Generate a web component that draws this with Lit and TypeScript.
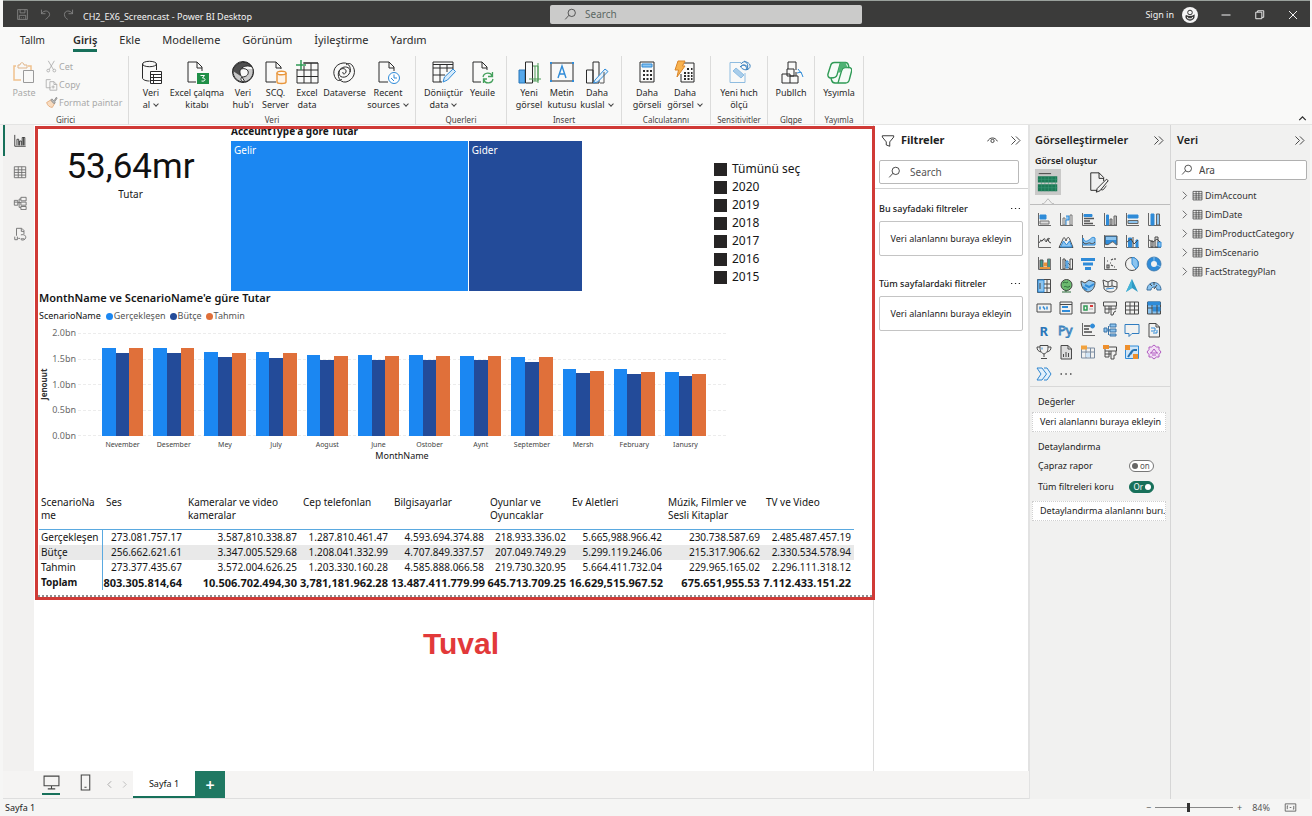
import { LitElement, html, css, svg } from "lit";
import { customElement, property, state } from "lit/decorators.js";
import { classMap } from "lit/directives/class-map.js";

const B = "#2f8bd8";
const L = "#8cc4ef";
const O = "#e8953a";
const G = "#2f9a55";
const axes = svg`<path d="M2.5 1v12.5H15" stroke="#666"/>`;

const ICONS: Record<string, unknown> = {
  save: svg`<path d="M2 2h12v12H2zM5 2v4h6V2M4 14V9h8v5M6 12h1M9 12h1"/>`,
  undo: svg`<path d="M3 2v5h5M3 7c3-5 10-4 10 1 0 3-3 4-5 6"/>`,
  redo: svg`<path d="M13 2v5H8M13 7C10 2 3 3 3 8c0 3 2 5 4 6"/>`,
  search: svg`<circle cx="9.5" cy="6" r="4.5"/><path d="M6 9l-4.500 5"/>`,
  user: svg`<circle cx="8" cy="8" r="8" fill="#f4f4f4" stroke="none"/><circle cx="8" cy="5.500" r="2.300" stroke="#333"/><path d="M4 8.500c-.5 6 8.500 6 8 0-2 1.500-6 1.500-8 0M6 10.500h4" stroke="#333" stroke-width="1.300"/>`,
  min: svg`<path d="M3.500 8h9"/>`,
  max: svg`<path d="M4 5.500h6.500v7H4zM6 5.500V4h6.500v7H10.500"/>`,
  close: svg`<path d="M4 4l8 8M12 4l-8 8"/>`,
  chevR2: svg`<path d="M3 3l5 5-5 5M8.500 3l5 5-5 5"/>`,
  chevR: svg`<path d="M5.500 2.500L11 8l-5.500 5.500"/>`,
  chevL: svg`<path d="M10 4L6 8l4 4"/>`,
  chevU: svg`<path d="M4 10l4-4 4 4" stroke-width="1.500"/>`,
  funnel: svg`<path d="M1.500 2h13v1.500L10 9v5l-4-1.500V9L1.500 3.500z"/>`,
  eye: svg`<path d="M2 9c2.500-5.500 9.500-5.500 12 0"/><circle cx="8" cy="8.500" r="2"/>`,
  paste: svg`<path d="M4 6H2v14h7M16 6h3v4" stroke="#f0c18d" stroke-width="1.500"/><path d="M6 8V5h2c0-3 4-3 4 0h3v3z" stroke="#e0b58a"/><path d="M11.500 10.500h10v12h-10z" stroke="#9a9a9a"/>`,
  cut: svg`<path d="M4 1l6.500 11M11.500 1L5 12"/><circle cx="4" cy="13" r="1.700"/><circle cx="11.500" cy="13" r="1.700"/>`,
  copy: svg`<path d="M7 12H1.500V2H7M6 4.500h5l3.500 3.500V15H6zM11 4.500V8h3.500M10 9v4M8 11h4"/>`,
  brush: svg`<path d="M2 8l5-3 5 4-3 5c-3 0-6-2-7-6z" stroke="#e3a876" fill="#f8dcc0"/><path d="M7 5l1.500-1.500L11 6l3-4.500 1 1L12 7l.5 1.500L11 9.500z" fill="#bbb" stroke="#888"/>`,
  database: svg`<path d="M3.500 4v14c0 2 4 3 7 3M17.500 4v6"/><ellipse cx="10.500" cy="4" rx="7" ry="2.700"/><path d="M11.500 11.500h11v12h-11zM11.500 14.500h11M11.500 17.500h11M11.500 20.500h11M14.500 14.500v9" fill="#fff"/>`,
  excelFile: svg`<path d="M17 11V7l-5-5H3v20h8M12 2v6h5"/><path d="M12 13h12v11H12z" fill="#1f8f47" stroke="none"/><path d="M15.500 15.500h4l-2 2.500c4 0 3 4-1 3" stroke="#fff"/>`,
  hub: svg`<circle cx="12" cy="12" r="10.500"/><path d="M2 9C6 1 17 0 21 7c-4-2-9-1-11 2-2 2-1 6 1 8-5 0-9-3-9-8z" fill="#4f4f4f"/><path d="M2 11c0 7 5 11 11 11-3-1-4-3-2-5M22 9c1 6-2 11-8 13l-3-5c5 0 7-3 6-6-1-2-4-3-7-2" fill="#c9c9c9"/>`,
  sqlFile: svg`<path d="M18 9V7l-5-5H3v20h10M13 2v6h5"/><path d="M14 13v9c0 2 9 2 9 0v-9" stroke="${O}" fill="#fdf3e8" stroke-width="1.400"/><ellipse cx="18.500" cy="13" rx="4.500" ry="1.800" stroke="${O}" fill="#fff" stroke-width="1.400"/>`,
  excelData: svg`<path d="M8 3h15v20H2V9M2 10h21M2 16.500h21M9 6v17M16 3v20M9 3h14"/><path d="M6 0v10M1 5h10" stroke="${G}" stroke-width="1.500"/>`,
  dataverse: svg`<path d="M4 19C-1 12 3 4 11 3c7-1 9 7 6 11-3 5-11 4-10-2 1-5 8-4 7 0-1 3-4 2-3 0M20 5c5 6 2 15-6 17-7 1-9-7-7-11 3-6 12-5 11 1"/><path d="M4 19c2 2 4 2 6 0M20 5c-2-2-4-2-6 0"/>`,
  recent: svg`<path d="M18 11V7l-5-5H3v20h9M13 2v6h5"/><circle cx="18" cy="18" r="5.500" stroke="${B}" fill="#fff"/><path d="M18 14.500V18h3M15 18l3 3" stroke="${B}"/>`,
  transform: svg`<path d="M2 2h20v7M2 2v20h9M2 8h20M2 15h12M9 5v17M16 5v7M2 4.500h20"/><path d="M12 22l1.500-5L22 9l2.500 2.500-8 8.500z" stroke="${B}" fill="#d6ebfb"/>`,
  refresh: svg`<path d="M17 10V7l-5-5H3v20h8M12 2v6h5"/><path d="M13 17c1-5 8-5 9-1M22.500 12v4.500H18M23 19c-1 5-8 5-9 1M13.500 23v-4H17" stroke="#45a05c" stroke-width="1.300"/>`,
  newVisual: svg`<path d="M2 10h6v13H2z" fill="#57a9ea" stroke="#2774b8"/><path d="M8.500 2h7v21h-7z"/><path d="M16 6h5v15h-5M18 6v15" stroke="#4d9b57"/><path d="M12 19h12M21 3v20" stroke="#4d9b57"/>`,
  textBox: svg`<path d="M1 3h22v18H1z"/><path d="M8 18l4-12 4 12M9.500 14h5" stroke="${B}" stroke-width="1.400"/><path d="M0 2h2v2H0zM22 2h2v2h-2zM0 20h2v2H0zM22 20h2v2h-2z" fill="${B}" stroke="none"/>`,
  moreVisual: svg`<path d="M1.500 10H8v13H1.500zM8 2h6v21H8z"/><path d="M10 20L20 9l3 2.500L12.500 22l-4 1z" fill="#e4f1fb" stroke="${B}"/><path d="M15 23h4V12" stroke="#555"/>`,
  calc: svg`<path d="M5 2h14v20H5z" /><path d="M7 4h10v3H7z" fill="${L}" stroke="${B}"/><path d="M8 11h2M11.500 11h2M15 11h2M8 15h2M11.500 15h2M15 15h2M8 19h2M11.500 19h2M15 19h2" stroke-width="2"/>`,
  calcFlash: svg`<path d="M11 3h10v19H8v-8"/><path d="M14 9h2M18 9h1.500M11 13h2M14.500 13h2M18 13h1.500M11 16h2M14.500 16h2M18 16h1.500M11 19h2M14.500 19h2M18 19h1.500" stroke-width="2"/><path d="M5 1h7L9.500 6H12l-8 11 1.500-7H2z" fill="#f8b24e" stroke="#d9852a"/>`,
  quick: svg`<path d="M14 2.500H3v20h15V13" stroke="#8fbce0"/><path d="M6 11l3-3 8 7-3 3z" fill="#a9cdea" stroke="#8dbde3"/><path d="M14 4c2-4 8-2 9 1 1 4-4 6-7 4-3-1-2-4 1-4s5 3 3 5M13 7c3-4 8-1 6 3M17 1c4 2 5 5 2 9" stroke="#3a82c0"/>`,
  publish: svg`<path d="M9 2h8v8M9 2v7M8 9h7v7H8zM3 14h8v9H3zM11 16h8v7h-8M17 12v4"/><path d="M18 13l4-1 2 5M19 9l3 4" stroke="${B}"/>`,
  copilot: svg`<path d="M7.500 2.500h11c2.500 0 2.500 1 3 3l.5 2c2.500 0 3 2 2.500 4l-2 7.500c-.5 3-2 4-4 4H8c-2 0-3-1-3.500-3L4 18c-2.500 0-3.500-2-3-4l2.500-8c.5-2.500 2-3.500 4-3.500z" fill="#f6fbf7" stroke="#2f9a55" stroke-width="1.400"/><path d="M13.500 2.500L10 15c-.5 2-2 3-6 3M22 7.500h-4c-2.500 0-3 1.500-3.500 3.500l-3.500 12" stroke="#2f9a55" stroke-width="1.300"/><path d="M13.500 2.500h5l2 5h-3c-2 0-2.500 1-3 3l-1 2h-3z" fill="#4fb274" stroke="none"/>`,
  navReport: svg`<path d="M2 1v13h12.500M4.500 13V6h2v7M7.500 13V8h2v5M10.500 13V4h3v9M12 4v9"/>`,
  navTable: svg`<path d="M1.500 2h13v12.500h-13zM1.500 5.500h13M1.500 8.500h13M1.500 11.500h13M6 2v12.500M10 2v12.500"/>`,
  navModel: svg`<path d="M9 1.500h6v4H9zM9 7h6v3.500H9zM9 12h6v3.500H9zM1.500 5h4v5.500h-4zM5.500 7.500H9M7 3.500V13h2M7 3.500h2M1.500 7h4"/>`,
  navQuery: svg`<path d="M4 10V1.500h6l2.500 2.500v4M9.500 2v3h3M2 11v3.500h3V11M6 13h2M9 9c4-1 6 1 5.500 3.500S9 16 9 13.500h4"/>`,
  build: svg`<path d="M2 3h14" stroke="#333"/><path d="M1 6h22v7H1zM1 15h22v8H1z" fill="#1c7a56" stroke="none"/><path d="M1 19h22M1 9.500h22M5 6v17M9 6v17M13 6v17M17 6v17M21 6v17" stroke="#3f9877" stroke-width=".6"/>`,
  format: svg`<path d="M10 21H3V2h9l5 5v4M12 2v6h5"/><path d="M20 9l2 1.500-9 11-4 1.500 1-4zM14 20c3 2 4-2 6-4" />`,
  v0: svg`${axes}<path d="M4 3h6v4H4z" fill="${B}" stroke="${B}"/><path d="M4 9h9v3H4z" fill="#ddd" stroke="#777"/>`,
  v1: svg`${axes}<path d="M5 6h2v7H5zM12 3h2v10h-2z" stroke="#777"/><path d="M8 4h3v4H8v5" fill="${L}" stroke="${B}"/>`,
  v2: svg`${axes}<path d="M4 2.500h8v2H4z" fill="${B}" stroke="${B}"/><path d="M4 6.500h10M4 9h6M4 11.500h9" stroke="#555" stroke-width="1.500"/>`,
  v3: svg`${axes}<path d="M4.500 3h2v10h-2z" fill="${B}" stroke="${B}"/><path d="M8 7h2v6H8zM12 4h2.500v9H12z" fill="#bbb" stroke="#666"/>`,
  v4: svg`${axes}<path d="M4 3h10v3H4z" fill="${B}" stroke="${B}"/><path d="M4 8.500h10v3H4z" fill="${L}" stroke="#666"/>`,
  v5: svg`${axes}<path d="M5 2h3v11H5z" fill="${B}" stroke="${B}"/><path d="M10.500 2h3v11h-3z" fill="${L}" stroke="#666"/>`,
  v6: svg`${axes}<path d="M3 9c2-4 3-1 4-3s2-2 2 0 2 2 2 0 2-2 3-1M4 6l2 1 2-2M10 8l2-3 1 3 2 1"/>`,
  v7: svg`<path d="M1 13.500L5 5c1-3 2-1 3 2 1-4 3-5 4-1l3 7.500z"/><path d="M2.500 13l3-6 3 4 3-4 2.500 6z" fill="${L}" stroke="${B}"/>`,
  v8: svg`${axes}<path d="M3 4c2 5 4 3 6 2s3-4 6-2v7H3z" fill="${L}" stroke="${B}"/><path d="M3 8c3 4 5 0 7 1s3 1 5-1"/>`,
  v9: svg`${axes}<path d="M3 2h12v9c-2 0-3-4-5-3s-4 4-7 2z" fill="${B}" stroke="#555"/><path d="M4 3h10v3H4z" fill="${L}" stroke="none"/>`,
  v10: svg`${axes}<path d="M4.500 4h3v9h-3zM12 6h2v7h-2z" fill="${B}" stroke="${B}"/><path d="M9 3v10M3 8l4-3 3 5 4-4"/>`,
  v11: svg`${axes}<path d="M5 7h2v6H5zM9 3h3v10H9z" fill="#ddd"/><path d="M12 8h3v5h-3z" fill="${L}" stroke="${B}"/><path d="M3 6l4 2 4-3 3 3"/>`,
  v12: svg`${axes}<path d="M4 4h3v9H4z" fill="#3f9a8c" stroke="#555"/><path d="M8 7h3v3H8z" fill="${O}" stroke="${O}"/><path d="M11.500 3h3v10h-3z" fill="#3f9a8c" stroke="#777"/><path d="M4 11h10v2H4z" fill="${O}" stroke="none"/>`,
  v13: svg`${axes}<path d="M5 3h2v10H5zM12 3h2.500v10H12zM7 4l5 5M7 9l5 4"/><path d="M8 5h2v7H8z" fill="${L}" stroke="${B}"/>`,
  v14: svg`<path d="M1 2h14v3H1zM3 6.500h10v3H3zM5 11h6v3H5z" fill="${B}" stroke="none"/>`,
  v15: svg`${axes}<path d="M5 9h2v3H5zM5 5h1M8 7h1M9 9l2 1M12 11h1M9 4l2-1M13 2v2" stroke-width="1.200"/>`,
  v16: svg`<circle cx="8" cy="8" r="6.500"/><path d="M8 1.500A6.500 6.500 0 0112 13L8 8z" fill="${L}" stroke="${B}"/>`,
  v17: svg`<circle cx="8" cy="8" r="5" stroke="${B}" stroke-width="4"/><circle cx="8" cy="8" r="7" stroke="#3b76a8" stroke-width=".8"/><path d="M8 5V1M11 9l4 2" stroke="${L}"/>`,
  v18: svg`<path d="M1.500 1.500h13v13h-13z"/><path d="M2 2h6v12H2z" fill="${L}" stroke="${B}"/><path d="M11 2v12M8 6h6M8 10h6M4 5v6"/>`,
  v19: svg`<circle cx="8.500" cy="7" r="5.500" fill="#6cba6f" stroke="#444"/><path d="M5 5c2-2 3 1 5-1M6 9c2-2 3 2 6-1M4 14h9M8 12v2" stroke="#2c6b3a"/>`,
  v20: svg`<path d="M1 3l4 2 4-3 6 2c0 5-2 9-7 10-4-1-7-5-7-11z" fill="${L}"/><path d="M5 7l4 2 5-3M3 9l4 3" stroke="${B}" stroke-width="2"/>`,
  v21: svg`<path d="M1 2l5 2 4-2 5 2v6c-2 4-5 4-7 4s-7-2-6-5zM6 4v5M10 2v6M2 8l4 1 4-1 5 1"/><path d="M4 11l8-1" stroke="${B}"/>`,
  v22: svg`<path d="M8 1l6 13-6-4-6 4z" fill="#2f9ac4" stroke="none"/><path d="M8 1v9l-6 4z" fill="#46b4d8" stroke="none"/>`,
  v23: svg`<path d="M1 12c0-10 14-10 14 0h-4c0-4-6-4-6 0z" fill="${L}" stroke="#3b6f9c"/><path d="M8 11l3-4M4 6l2 2M8 4v3"/>`,
  v24: svg`<path d="M1 4h14v8H1z"/><path d="M4 6.500v3M7 6.500l2 3M11 6.500v3" stroke="${B}" stroke-width="1.500"/>`,
  v25: svg`<path d="M2 2h12v12H2zM2 4.500h12"/><path d="M4 7h6M4 11h8" stroke="${B}" stroke-width="2"/>`,
  v26: svg`<path d="M1 3h14v10H1z"/><path d="M4 6h3v4H4z" stroke="${G}" stroke-width="1.500"/><path d="M10 6h3" stroke="#d83b3b" stroke-width="2"/><path d="M9 9h4" stroke="#aaa"/>`,
  v27: svg`<path d="M1.500 2h13v4h-13zM3 6v7h4V6M9 6v3h5V6M9 9v6h2l1-3 2-1M3 9h6"/>`,
  v28: svg`<path d="M1.500 2h13v12h-13zM1.500 6h13M1.500 10h13M6 2v12M10.500 2v12"/>`,
  v29: svg`<path d="M1.500 2h13v12h-13z" fill="${L}"/><path d="M2 2h12v3H2zM7 7h7v4H7z" fill="${B}" stroke="${B}"/><path d="M6 5v9M1.500 8h5M11 5v9"/>`,
  v30: svg`<text x="3.500" y="13.500" font-size="13" font-weight="700" fill="#2b76b9" stroke="none">R</text>`,
  v31: svg`<text x="0" y="12.500" font-size="13" fill="none" stroke="#3a82bd" stroke-width=".9">Py</text>`,
  v32: svg`${axes}<path d="M4 4h6M4 7h5M4 10h8" stroke-width="1.500"/><circle cx="12.500" cy="4" r="2" fill="${B}" stroke="${B}"/>`,
  v33: svg`<path d="M8 2h6v3H8zM8 7h6v3H8zM8 12h6v2H8zM2 6h3v4H2zM5 8h3M6.500 4v9" fill="${L}" stroke="#3a73a6"/>`,
  v34: svg`<path d="M1 2.500h14v9H8l-3 3v-3H1z" stroke="#2f7cc0"/>`,
  v35: svg`<path d="M3 15V1.500h7L13.500 5v10zM10 1.500V5h3.500"/><path d="M5 6h4v3H5M7 11h4V8" stroke="${B}"/>`,
  v36: svg`<path d="M4 1.500h8c0 4 0 7-4 8.500-4-1.500-4-4.500-4-8.500zM4 3H1c0 3 1 4 4 5M12 3h3c0 3-1 4-4 5M8 10v3M5 14.500h6"/><path d="M6 3.500v2" stroke="${B}"/>`,
  v37: svg`<path d="M3 15V1.500h7L13.500 5v10zM10 1.500V5h3.500M5.500 13v-3M8 13V8M10.500 13v-4" fill="#ddd"/>`,
  v38: svg`<path d="M1.500 4h13v10h-13zM1.500 8h13M6 4v10M10.500 4v10" stroke="#7a8ba0"/><path d="M1 1.500h6v4H1z" fill="#f2a23c" stroke="none"/><path d="M6 9h4v4H6z" fill="#cfe4f6" stroke="none"/>`,
  v39: svg`<path d="M3 3h11.500v4H3zM3 7v6h4V7M9 7v8h3v-4h2V7M3 10h6"/><path d="M1 1h6v4H1z" fill="#ee8f2c" stroke="none"/>`,
  v40: svg`<path d="M1.500 2h13v12.500h-13z" fill="#cfe5f7" stroke="${B}"/><path d="M1 1h5v5H1zM9 10h5v5H9z" fill="#ee8f2c" stroke="none"/><path d="M6 10c2 0 1-4 4-4h3M4 13l4-6" stroke="#2673b3" stroke-width="2"/>`,
  v41: svg`<path d="M8 1l2.500 2H13v2.500L15 8l-2 2.500V13h-2.500L8 15l-2.500-2H3v-2.500L1 8l2-2.500V3h2.500z" stroke="#b05bc0" fill="#f2dff5"/><path d="M5 9l3-4 3 4M4 9h8M6 11h4" stroke="#b05bc0"/>`,
  v42: svg`<path d="M1 2h5l4.500 6L6 14H1l4-6zM8 2h3l4 6-4 6H8" stroke="#2f86d0" fill="#e2f0fb"/>`,
  v43: svg`<path d="M2.500 8h1.500M7.300 8h1.500M12 8h1.500" stroke-width="1.500"/>`,
  monitor: svg`<path d="M1 2h14v9H1zM8 11v3M4.500 14h7"/>`,
  phone: svg`<path d="M4 1h8v14H4zM7 12.500h2"/>`,
  fit: svg`<path d="M1.500 3.500h13v9h-13zM4 6v4M12 6v4M7 8h2M4 6h1M11 10h1"/>`,
  caret: svg`<path d="M0 15.500h2.500L8 9l5.500 6.500H16" stroke="#aaa" fill="#f1f1f0"/>`,
};
const LARGE = new Set(["paste", "database", "excelFile", "hub", "sqlFile", "excelData", "dataverse", "recent", "transform", "refresh", "newVisual", "textBox", "moreVisual", "calc", "calcFlash", "quick", "publish", "copilot", "build", "format"]);

function icon(name: string, size = 16) {
  return html`<svg width=${size} height=${size} viewBox=${LARGE.has(name) ? "0 0 25 25" : "0 0 16 16"} fill="none" stroke="currentColor" aria-hidden="true">${ICONS[name]}</svg>`;
}

const base = css`
  * { box-sizing: border-box; }
  button, input { font: inherit; color: inherit; margin: 0; }
  button { border: 0; background: none; padding: 0; text-align: inherit; }
  svg { display: block; flex: none; }
  h1, h2, h3, p, ul { margin: 0; padding: 0; list-style: none; }
`;

@customElement("title-bar")
class TitleBar extends LitElement {
  static styles = [base, css`
    :host { display: grid; grid-template-columns: 547fr 312px 448fr; align-items: center; height: 27px; margin: 0 2px 0 3px; padding-top: 1px; background: #3b3b3a; color: #f2f2f2; border-top: 1px solid #9aa19c; font-size: 9px; }
    .left, .right { display: flex; align-items: center; }
    .left { padding-left: 13px; color: #8b8b8b; }
    .left button + button { margin-left: 10px; }
    .name { margin-left: 8px; padding-top: 4px; color: #f2f2f2; }
    .search { display: flex; align-items: center; height: 19px; background: #cbcbca; border-radius: 2px; padding-left: 14px; gap: 8px; color: #3a3a3a; font-size: 10px; }
    .search input { flex: 1; min-width: 0; border: 0; background: none; outline: 0; padding: 0; }
    .search input::placeholder { color: #5b6864; opacity: 1; }
    .right { justify-content: flex-end; padding-right: 9px; }
    .right button { display: flex; align-items: center; gap: 8px; }
    .win { margin-left: 18px; }
    .first { margin-left: 20px; }
  `];
  render() {
    return html`
      <div class="left">
        <button aria-label="Save">${icon("save", 13)}</button>
        <button aria-label="Undo">${icon("undo", 13)}</button>
        <button aria-label="Redo">${icon("redo", 13)}</button>
        <span class="name">CH2_EX6_Screencast - Power BI Desktop</span>
      </div>
      <label class="search">${icon("search", 13)}<input aria-label="Search" placeholder="Search"></label>
      <div class="right">
        <button>Sign in ${icon("user", 16)}</button>
        <button class="win first" aria-label="Minimize">${icon("min")}</button>
        <button class="win" aria-label="Maximize">${icon("max", 15)}</button>
        <button class="win" aria-label="Close">${icon("close")}</button>
      </div>`;
  }
}

type Cmd = { icon: string; text: string[]; w: number; more?: boolean };
const GROUPS: { label: string; items: Cmd[] }[] = [
  { label: "Veri", items: [
    { icon: "database", text: ["Veri", "al"], w: 32, more: true },
    { icon: "excelFile", text: ["Excel çalqma", "kitabı"], w: 60 },
    { icon: "hub", text: ["Veri", "hub'ı"], w: 32 },
    { icon: "sqlFile", text: ["SCQ.", "Server"], w: 33 },
    { icon: "excelData", text: ["Excel", "data"], w: 30 },
    { icon: "dataverse", text: ["Dataverse"], w: 45 },
    { icon: "recent", text: ["Recent", "sources"], w: 42, more: true },
  ]},
  { label: "Querleri", items: [
    { icon: "transform", text: ["Döniiçtür", "data"], w: 43, more: true },
    { icon: "refresh", text: ["Yeuile"], w: 35 },
  ]},
  { label: "Insert", items: [
    { icon: "newVisual", text: ["Yeni", "görsel"], w: 32 },
    { icon: "textBox", text: ["Metin", "kutusu"], w: 34 },
    { icon: "moreVisual", text: ["Daha", "kuslal"], w: 36, more: true },
  ]},
  { label: "Calculatannı", items: [
    { icon: "calc", text: ["Daha", "görseli"], w: 38 },
    { icon: "calcFlash", text: ["Daha", "görsel"], w: 38, more: true },
  ]},
  { label: "Sensitivitler", items: [{ icon: "quick", text: ["Yeni hıch", "ölçü"], w: 44 }] },
  { label: "Glqpe", items: [{ icon: "publish", text: ["Publlch"], w: 34 }] },
  { label: "Yayımla", items: [{ icon: "copilot", text: ["Ysyımla"], w: 36 }] },
];

@customElement("app-ribbon")
class AppRibbon extends LitElement {
  static styles = [base, css`
    :host { display: block; background: #f9f9f8; box-shadow: inset 0 -1px #e4e4e3; color: #2a2a2a; font-size: 9px; }
    nav { display: flex; gap: 22px; padding: 5px 20px 0; font-size: 11px; line-height: 16px; }
    nav button { display: block; height: 20px; border-bottom: 3px solid transparent; padding-bottom: 1px; }
    nav .first { font-size: 10px; margin-right: 6px; }
    nav .on { border-color: #17705a; font-weight: 600; }
    .groups { display: flex; align-items: stretch; padding-left: 3px; margin-top: 4px; height: 69px; }
    .group { display: flex; flex-direction: column; padding: 0 6px; border-right: 1px solid #dcdcdb; }
    .clip { width: 126px; padding: 0; color: #a9a9a9; }
    .items { display: flex; flex: 1; padding-top: 4px; }
    .label { height: 11px; line-height: 11px; font-size: 8px; color: #444; white-space: nowrap; display: flex; justify-content: center; }
    .cmd { display: flex; flex-direction: column; align-items: center; line-height: 12px; white-space: nowrap; }
    .cmd svg { margin-bottom: 2px; }
    .line { display: flex; align-items: center; gap: 3px; }
    .tick { width: 4px; height: 4px; border: solid #444; border-width: 0 1px 1px 0; rotate: 45deg; margin: 0 1px 2px; }
    .paste { width: 42px; }
    .list { display: flex; flex-direction: column; gap: 5px; }
    .list button { display: flex; align-items: center; gap: 1px; height: 13px; white-space: nowrap; }
    .fold { margin-left: auto; align-self: flex-end; padding-right: 3px; }
  `];
  render() {
    const tabs = ["Tallm", "Giriş", "Ekle", "Modelleme", "Görünüm", "İyileştirme", "Yardım"];
    return html`
      <nav>${tabs.map((t, i) => html`<button class=${classMap({ first: i === 0, on: i === 1 })}>${t}</button>`)}</nav>
      <div class="groups">
        <div class="group clip">
          <div class="items">
            <button class="cmd paste">${icon("paste", 25)}Paste</button>
            <div class="list">
              <button>${icon("cut", 13)}Cet</button>
              <button>${icon("copy", 13)}Copy</button>
              <button>${icon("brush", 13)}Format paintar</button>
            </div>
          </div>
          <span class="label">Girici</span>
        </div>
        ${GROUPS.map(g => html`
          <div class="group">
            <div class="items">${g.items.map(c => html`
              <button class="cmd" style="width:${c.w}px">${icon(c.icon, 25)}
                ${c.text.map((t, i) => html`<span class="line">${t}${c.more && i === c.text.length - 1 ? html`<i class="tick"></i>` : ""}</span>`)}
              </button>`)}</div>
            <span class="label">${g.label}</span>
          </div>`)}
        <button class="fold" aria-label="Collapse ribbon">${icon("chevU", 13)}</button>
      </div>`;
  }
}

const MONTHS: [string, number[]][] = [
  ["Nevember", [1.71, 1.62, 1.71]], ["Desember", [1.71, 1.61, 1.71]], ["Mey", [1.63, 1.53, 1.61]],
  ["July", [1.63, 1.51, 1.61]], ["Aogust", [1.58, 1.48, 1.56]], ["June", [1.58, 1.48, 1.55]],
  ["Ostober", [1.57, 1.47, 1.55]], ["Aynt", [1.56, 1.47, 1.55]], ["September", [1.53, 1.43, 1.53]],
  ["Mersh", [1.3, 1.22, 1.26]], ["February", [1.3, 1.2, 1.25]], ["Ianusry", [1.24, 1.16, 1.2]],
];
const HEAD = ["ScenarioNa\nme", "Ses", "Kameralar ve video\nkameralar", "Cep telefonlan", "Bilgisayarlar", "Oyunlar ve\nOyuncaklar", "Ev Aletleri", "Múzik, Filmler ve\nSesli Kitaplar", "TV ve Video"];
const COLS = [64, 82, 115, 91, 96, 82, 96, 98, 91];
const ROWS = [
  ["Gerçekleşen", "273.081.757.17", "3.587,810.338.87", "1.287.810.461.47", "4.593.694.374.88", "218.933.336.02", "5.665,988.966.42", "230.738.587.69", "2.485.487.457.19"],
  ["Bütçe", "256.662.621.61", "3.347.005.529.68", "1.208.041.332.99", "4.707.849.337.57", "207.049.749.29", "5.299.119.246.06", "215.317.906.62", "2.330.534.578.94"],
  ["Tahmin", "273.377.435.67", "3.572.004.626.25", "1.203.330.160.28", "4.585.888.066.58", "219.730.320.95", "5.664.411.732.04", "229.965.165.02", "2.296.111.318.12"],
  ["Toplam", "803.305.814,64", "10.506.702.494,30", "3,781,181.962.28", "13.487.411.779.99", "645.713.709.25", "16.629,515.967.52", "675.651,955.53", "7.112.433.151.22"],
];

@customElement("report-canvas")
class ReportCanvas extends LitElement {
  static styles = [base, css`
    :host { display: block; background: #fff; border-right: 1px solid #dcdcdc; color: #161616; font-size: 10px; padding: 1px 0 0 1px; }
    .frame { position: relative; border: 3px solid #d03a36; margin-right: -2px; overflow: hidden; padding-bottom: 6px; }
    .frame::after { content: ""; display: block; margin-top: 5px; border-bottom: 2px dotted #8f8f8f; margin-bottom: -6px; }
    .top { display: grid; grid-template-columns: 193fr 351fr 132fr 158fr; }
    .kpi { text-align: center; padding: 16px 8px 0 0; }
    .kpi b { display: block; font: 400 35px/43px Roboto, sans-serif; color: #111; }
    .kpi span { display: block; line-height: 13px; }
    h3 { font-size: 11px; font-weight: 600; line-height: 13px; white-space: nowrap; }
    .tree h3 { margin-top: -4px; height: 16px; font-size: 10px; font-weight: 700; }
    .tiles { display: flex; gap: 1px; height: 150px; color: #fff; line-height: 13px; }
    .tiles div { padding: 3px; background: #1b87f2; flex: 239; }
    .tiles .b { background: #234b99; flex: 111; }
    .slicer { grid-column: 4; padding-top: 31px; font-size: 12px; }
    .slicer label { display: flex; align-items: center; gap: 5px; height: 18px; }
    .slicer input { appearance: none; width: 13px; height: 13px; background: #262424; }
    .chart { padding-left: 1px; }
    .legend { display: flex; align-items: center; font-size: 9px; line-height: 12px; margin-top: 6px; color: #555; }
    .legend b { font-weight: 400; color: #111; margin-right: 5px; }
    .legend span { display: flex; align-items: center; gap: 1px; margin-right: 4px; }
    .legend i { width: 7px; height: 7px; border-radius: 50%; }
    .s0 { background: #1b87f2; } .s1 { background: #234b99; } .s2 { background: #e0703a; }
    .area { display: grid; grid-template-columns: 10px 25px 1fr; column-gap: 2px; margin: 11px 146px 0 0; }
    .ytitle { writing-mode: vertical-rl; rotate: 180deg; text-align: center; font-size: 8px; line-height: 10px; font-weight: 700; color: #333; }
    .ticks { display: flex; flex-direction: column; justify-content: space-between; margin: -6px 0; line-height: 12px; font-size: 9px; color: #6a6a6a; text-align: right; }
    .plot { display: grid; height: 103px; }
    .lines, .bars { grid-area: 1 / 1; }
    .lines { display: flex; flex-direction: column; justify-content: space-between; }
    .lines i { border-top: 1px dashed #ececec; }
    .bars, .months { display: flex; padding: 0 15px 0 19px; }
    .m { flex: 1; display: flex; align-items: flex-end; padding: 0 5px; }
    .m i { flex: 1; }
    .months { grid-column: 3; font-size: 7px; line-height: 9px; padding-top: 4px; color: #444; }
    .months span { flex: 1; width: 0; text-align: center; }
    .xtitle { grid-column: 3; text-align: center; font-size: 9px; line-height: 13px; }
    .tablewrap { padding: 34px 18px 0 1px; }
    table { width: 100%; table-layout: fixed; border-collapse: collapse; white-space: nowrap; }
    th { white-space: pre; font-weight: 400; text-align: left; vertical-align: top; padding: 0 3px 7px; line-height: 13px; border-bottom: 1px solid #5aa9e0; }
    td { text-align: right; padding: 0 3px; line-height: 15px; height: 15px; }
    td:first-child { text-align: left; border-right: 1px solid #5aa9e0; padding-left: 2px; }
    th:first-child { padding-left: 2px; }
    tbody tr:nth-child(2) { background: #e9e9e9; }
    tbody tr:last-child { font-size: 11px; font-weight: 700; }
    tbody tr:last-child td + td { padding-left: 0; }
    tbody tr:last-child td:first-child { font-size: 10px; }
    .note { margin-top: 26px; padding-left: 14px; text-align: center; font: 700 30px/36px "Liberation Sans", sans-serif; color: #e2393a; }
  `];
  render() {
    return html`
      <div class="frame">
        <div class="top">
          <div class="kpi"><b>53,64mr</b><span>Tutar</span></div>
          <div class="tree"><h3>AcceuntType'a göre Tutar</h3><div class="tiles"><div>Gelir</div><div class="b">Gider</div></div></div>
          <div class="slicer">${["Tümünü seç", "2020", "2019", "2018", "2017", "2016", "2015"].map(y => html`<label><input type="checkbox">${y}</label>`)}</div>
        </div>
        <div class="chart">
          <h3>MonthName ve ScenarioName'e güre Tutar</h3>
          <div class="legend"><b>ScenarioName</b>${["Gerçekleşen", "Bütçe", "Tahmin"].map((s, i) => html`<span><i class="s${i}"></i>${s}</span>`)}</div>
          <div class="area">
            <div class="ytitle">Jenouut</div>
            <div class="ticks">${["2.0bn", "1.5bn", "1.0bn", "0.5bn", "0.0bn"].map(t => html`<span>${t}</span>`)}</div>
            <div class="plot">
              <div class="lines"><i></i><i></i><i></i><i></i><i></i></div>
              <div class="bars">${MONTHS.map(([, v]) => html`<div class="m">${v.map((n, i) => html`<i class="s${i}" style="height:${n * 50}%"></i>`)}</div>`)}</div>
            </div>
            <div class="months">${MONTHS.map(([n]) => html`<span>${n}</span>`)}</div>
            <div class="xtitle">MonthName</div>
          </div>
        </div>
        <div class="tablewrap">
          <table>
            <colgroup>${COLS.map(c => html`<col style="width:${(c / 815) * 100}%">`)}</colgroup>
            <thead><tr>${HEAD.map(h => html`<th scope="col">${h}</th>`)}</tr></thead>
            <tbody>${ROWS.map(r => html`<tr>${r.map(c => html`<td>${c}</td>`)}</tr>`)}</tbody>
          </table>
        </div>
      </div>
      <div class="note">Tuval</div>`;
  }
}

@customElement("filter-pane")
class FilterPane extends LitElement {
  static styles = [base, css`
    :host { display: block; background: #fff; font-size: 9px; color: #222; border-right: 1px solid #e2e2e2; }
    header { display: flex; align-items: center; height: 31px; padding: 0 6px 0 7px; }
    h2 { font-size: 11px; font-weight: 700; margin-left: 6px; flex: 1; }
    header button + button { margin-left: 10px; }
    .find { padding: 4px 9px 4px 5px; border-bottom: 1px solid #d2d2d2; }
    .find label { display: flex; align-items: center; gap: 9px; height: 24px; border: 1px solid #b9b9b9; border-radius: 2px; padding-left: 8px; font-size: 10px; }
    input { flex: 1; min-width: 0; border: 0; outline: 0; padding: 0; background: none; }
    input::placeholder { color: #555; opacity: 1; }
    section { padding: 13px 5px 0 5px; }
    section + section { padding-top: 21px; }
    .row { display: flex; justify-content: space-between; line-height: 14px; margin-bottom: 5px; white-space: nowrap; }
    h3 { font-size: 9px; font-weight: 500; }
    .row svg { margin-right: 1px; }
    .drop { height: 35px; display: flex; align-items: center; justify-content: center; border: 1px solid #c4c4c4; border-radius: 2px; white-space: nowrap; }
  `];
  render() {
    return html`
      <header>${icon("funnel", 14)}<h2>Filtreler</h2><button aria-label="Show">${icon("eye", 13)}</button><button aria-label="Collapse">${icon("chevR2", 13)}</button></header>
      <div class="find"><label>${icon("search", 13)}<input aria-label="Search" placeholder="Search"></label></div>
      ${["Bu sayfadaki filtreler", "Tüm sayfalardaki flitreler"].map(t => html`
        <section><div class="row"><h3>${t}</h3>${icon("v43", 13)}</div><div class="drop">Veri alanlannı buraya ekleyin</div></section>`)}`;
  }
}

@customElement("visual-pane")
class VisualPane extends LitElement {
  @state() cross = false;
  @state() keep = true;
  static styles = [base, css`
    :host { display: block; background: #f1f1f0; font-size: 9px; color: #222; border-left: 1px solid #e2e2e2; }
    header { display: flex; align-items: center; height: 31px; padding: 0 5px 0 5px; }
    h2 { font-size: 11px; font-weight: 600; flex: 1; }
    .sub { font-size: 9px; font-weight: 600; line-height: 10px; padding-left: 5px; }
    .modes { display: flex; gap: 25px; padding: 3px 0 0 5px; border-bottom: 1px solid #bdbdbd; height: 39px; }
    .modes button { display: grid; place-items: center; width: 26px; height: 26px; }
    .modes .on { background: #c9c9c8; align-content: start; padding-top: 2px; }
    .tip { margin-top: -1px; }
    .grid { display: grid; grid-template-columns: repeat(6, 22px); grid-auto-rows: 22px; padding: 4px 0 1px 3px; color: #4a4a4a; }
    .grid button { display: grid; place-items: center; }
    .wells { border-top: 1px solid #d8d8d8; padding: 8px 4px 0 2px; line-height: 13px; }
    h3 { font-size: 9px; font-weight: 400; padding-left: 6px; }
    .drop { height: 20px; background: #fff; border: 1px dotted #d0d0d0; padding: 0 7px; line-height: 18px; overflow: hidden; white-space: nowrap; margin: 4px 0 8px; }
    .tog { display: flex; align-items: center; justify-content: space-between; height: 21px; padding: 0 12px 0 6px; }
    h3 + .tog { margin-top: 2px; }
    .tog input { position: absolute; opacity: 0; width: 1px; height: 1px; }
    .pill { display: flex; align-items: center; gap: 2px; width: 25px; height: 12px; border: 1px solid #777; border-radius: 6px; background: #fff; padding: 0 2px; font-size: 8px; line-height: 8px; color: #555; }
    .pill::before { content: ""; width: 6px; height: 6px; border-radius: 50%; background: #666; }
    .pill.yes { flex-direction: row-reverse; background: #17705a; border-color: #17705a; color: #fff; }
    .pill.yes::before { background: #fff; }
  `];
  render() {
    return html`
      <header><h2>Görselleştirmeler</h2><button aria-label="Collapse">${icon("chevR2", 13)}</button></header>
      <p class="sub">Görsel oluştur</p>
      <div class="modes">
        <button class="on" aria-label="Build visual">${icon("build", 22)}<span class="tip">${icon("caret", 12)}</span></button>
        <button aria-label="Format page">${icon("format", 23)}</button>
      </div>
      <div class="grid">${Array.from({ length: 44 }, (_, i) => html`<button aria-label="Visual ${i + 1}">${icon("v" + i, 16)}</button>`)}</div>
      <div class="wells">
        <h3>Değerler</h3><div class="drop">Veri alanlannı buraya ekleyin</div>
        <h3>Detaylandırma</h3>
        <label class="tog">Çapraz rapor<input type="checkbox" .checked=${this.cross} @change=${() => (this.cross = !this.cross)}><span class=${classMap({ pill: true, yes: this.cross })}>on</span></label>
        <label class="tog">Tüm filtreleri koru<input type="checkbox" .checked=${this.keep} @change=${() => (this.keep = !this.keep)}><span class=${classMap({ pill: true, yes: this.keep })}>Or</span></label>
        <div class="drop">Detaylandırma alanlannı burı.</div>
      </div>`;
  }
}

@customElement("data-pane")
class DataPane extends LitElement {
  static styles = [base, css`
    :host { display: block; background: #f1f1f0; font-size: 9px; color: #222; border-left: 1px solid #d6d6d6; margin-right: 2px; }
    header { display: flex; align-items: center; height: 31px; padding: 0 4px 0 6px; }
    h2 { font-size: 11px; font-weight: 600; flex: 1; }
    .find { display: flex; align-items: center; gap: 6px; height: 20px; margin: 4px 3px 6px 4px; border: 1px solid #b0b0b0; border-radius: 2px; background: #fff; padding-left: 5px; font-size: 10px; }
    input { flex: 1; min-width: 0; border: 0; outline: 0; padding: 0; background: none; }
    input::placeholder { color: #444; opacity: 1; }
    li { height: 19px; padding-left: 8px; color: #333; }
    li button { display: flex; align-items: center; gap: 2px; height: 19px; }
  `];
  render() {
    return html`
      <header><h2>Veri</h2><button aria-label="Collapse">${icon("chevR2", 13)}</button></header>
      <label class="find">${icon("search", 12)}<input aria-label="Ara" placeholder="Ara"></label>
      <ul>${["DimAccount", "DimDate", "DimProductCategory", "DimScenario", "FactStrategyPlan"].map(t => html`
        <li><button>${icon("chevR", 11)}${icon("navTable", 11)}${t}</button></li>`)}</ul>`;
  }
}

@customElement("app-root")
class AppRoot extends LitElement {
  @property({ type: Number }) zoom = 84;
  static styles = [base, css`
    :host { display: flex; flex-direction: column; height: 100vh; min-height: 600px; font: 9px/1.3 "Noto Sans", "Open Sans", sans-serif; color: #222; background: #f6f6f5; overflow: hidden; }
    .main { flex: 1; min-height: 0; display: grid; grid-template-columns: 31px minmax(0, 1fr) 155px 141px 142px; grid-template-rows: 1fr 28px; padding-left: 3px; }
    .rail { display: flex; flex-direction: column; background: #f2f1f0; color: #6c6c6c; }
    .rail button { display: grid; place-items: center; height: 31px; border-left: 2px solid transparent; }
    .rail .on { border-color: #17705a; color: #333; }
    visual-pane, data-pane { grid-row: 1 / 3; }
    visual-pane { grid-column: 4; } data-pane { grid-column: 5; }
    .pages { grid-row: 2; grid-column: 1 / 4; display: flex; align-items: stretch; background: #f5f4f3; border-bottom: 1px solid #dedede; padding-left: 39px; color: #444; }
    .pages button { display: grid; place-items: center; }
    .view { width: 18px; border-bottom: 2px solid transparent; margin: 0 16px 3px 0; }
    .view + .view { margin-right: 8px; }
    .view.on { border-color: #17705a; }
    .nav { width: 15px; color: #999; }
    .pages .tab { width: 62px; margin-left: 1px; background: #fff; border-bottom: 2px solid #17705a; color: #111; }
    .pages .add { width: 30px; background: #1f7862; color: #fff; font-size: 16px; line-height: 16px; font-weight: 600; }
    footer { display: flex; align-items: center; height: 17px; padding: 0 15px 0 5px; background: #f5f5f4; color: #555; }
    footer span:first-child { flex: 1; color: #222; }
    .zoom { display: flex; align-items: center; gap: 4px; }
    input[type="range"] { appearance: none; width: 78px; height: 11px; background: linear-gradient(#888, #888) center / 100% 1px no-repeat; }
    input[type="range"]::-webkit-slider-thumb { appearance: none; width: 3px; height: 9px; background: #333; }
    .pct { margin: 0 14px 0 10px; }
  `];
  render() {
    return html`
      <title-bar></title-bar>
      <app-ribbon></app-ribbon>
      <div class="main">
        <nav class="rail">${["navReport", "navTable", "navModel", "navQuery"].map((n, i) => html`<button class=${classMap({ on: i === 0 })} aria-label="View ${i + 1}">${icon(n, 14)}</button>`)}</nav>
        <report-canvas></report-canvas>
        <filter-pane></filter-pane>
        <visual-pane></visual-pane>
        <data-pane></data-pane>
        <div class="pages">
          <button class="view on" aria-label="Desktop layout">${icon("monitor", 17)}</button>
          <button class="view" aria-label="Mobile layout">${icon("phone", 17)}</button>
          <button class="nav" aria-label="Previous page">${icon("chevL", 13)}</button>
          <button class="nav" aria-label="Next page">${icon("chevR", 9)}</button>
          <button class="tab">Sayfa 1</button>
          <button class="add" aria-label="New page">+</button>
        </div>
      </div>
      <footer><span>Sayfa 1</span>
        <div class="zoom"><button aria-label="Zoom out">−</button><input type="range" aria-label="Zoom" min="0" max="200" .value=${String(this.zoom)} @input=${(e: Event) => (this.zoom = Number((e.target as HTMLInputElement).value))}><button aria-label="Zoom in">+</button></div>
        <span class="pct">${this.zoom}%</span>${icon("fit", 13)}
      </footer>`;
  }
}
